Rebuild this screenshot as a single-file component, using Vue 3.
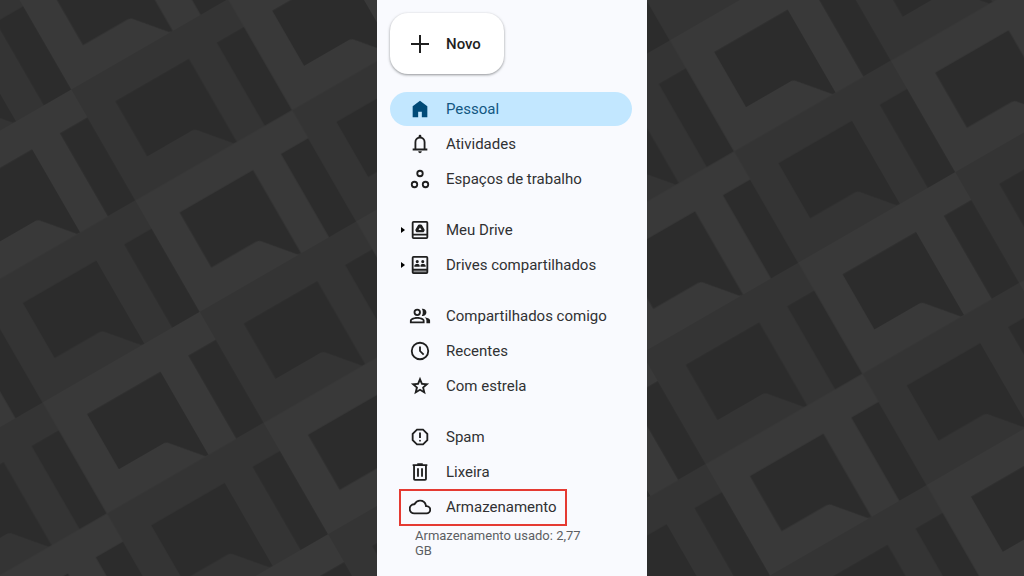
<script setup>
const groups = [
  [
    { label: 'Pessoal', icon: 'home', active: true },
    { label: 'Atividades', icon: 'bell' },
    { label: 'Espaços de trabalho', icon: 'spaces' },
  ],
  [
    { label: 'Meu Drive', icon: 'drive', expandable: true },
    { label: 'Drives compartilhados', icon: 'shared', expandable: true },
  ],
  [
    { label: 'Compartilhados comigo', icon: 'people' },
    { label: 'Recentes', icon: 'clock' },
    { label: 'Com estrela', icon: 'star' },
  ],
  [
    { label: 'Spam', icon: 'spam' },
    { label: 'Lixeira', icon: 'trash' },
    { label: 'Armazenamento', icon: 'cloud', marked: true },
  ],
]

const icons = {
  home: 'M4 21V9l8-6 8 6v12h-6v-6h-4v6z',
  bell: 'M4 19v-2h2v-7c0-2.800 1.800-5.100 4.500-5.800v-.7a1.500 1.500 0 0 1 3 0v.7C16.200 4.900 18 7.200 18 10v7h2v2zm8 3a2 2 0 0 1-2-2h4a2 2 0 0 1-2 2zM8 17h8v-7a4 4 0 0 0-8 0z',
  spaces: 'M6 22a4 4 0 1 1 0-8 4 4 0 0 1 0 8zm12 0a4 4 0 1 1 0-8 4 4 0 0 1 0 8zM6 20a2 2 0 1 0 0-4 2 2 0 0 0 0 4zm12 0a2 2 0 1 0 0-4 2 2 0 0 0 0 4zM12 10a4 4 0 1 1 0-8 4 4 0 0 1 0 8zm0-2a2 2 0 1 0 0-4 2 2 0 0 0 0 4z',
  drive: 'M5 2.200h14a2 2 0 0 1 2 2v15.600a2 2 0 0 1-2 2H5a2 2 0 0 1-2-2V4.200a2 2 0 0 1 2-2zM5 4.200v12h14v-12zM5 18v1.800h14V18zM11 6h2q.8 0 1.200.7l2.700 4.700q.4.700 0 1.400l-.6 1q-.4.700-1.200.7H8.900q-.8 0-1.200-.7l-.6-1q-.4-.7 0-1.400l2.700-4.700Q10.200 6 11 6zM12 9.200l-1.700 2.900h3.400z',
  shared: 'M5 2.200h14a2 2 0 0 1 2 2v15.600a2 2 0 0 1-2 2H5a2 2 0 0 1-2-2V4.200a2 2 0 0 1 2-2zM5 4.200v12h14v-12zM5 18v1.800h14V18zM9 10a1.700 1.700 0 1 1 0-3.400A1.700 1.700 0 0 1 9 10zm6 0a1.700 1.700 0 1 1 0-3.400 1.700 1.700 0 0 1 0 3.400zM5.800 14v-1c0-1.300 1.600-2 3.200-2s2.700.7 2.700 2v1zm6.700 0v-1c0-1.300 1-2 2.700-2s3 .7 3 2v1z',
  people: 'M1 20v-2.800c0-1.200.6-2.100 1.600-2.600C4.500 13.600 6.700 13 9 13s4.500.6 6.400 1.600c1 .5 1.600 1.400 1.600 2.600V20zm18 0v-3c0-1.500-.7-2.700-2-3.700 1.400.2 2.700.6 3.900 1.200 1.400.7 2.100 1.500 2.100 2.500v3zM9 12a4 4 0 1 1 0-8 4 4 0 0 1 0 8zm10-4a4 4 0 0 1-5 3.900A6 6 0 0 0 15 8a6 6 0 0 0-1-3.900A4 4 0 0 1 19 8zM3 18h12v-.8c0-.4-.2-.7-.5-.9C12.800 15.500 11 15 9 15s-3.800.5-5.500 1.300c-.3.200-.5.500-.5.900zm6-8a2 2 0 1 0 0-4 2 2 0 0 0 0 4z',
  clock: 'M15.300 16.700l1.400-1.400-3.700-3.700V7h-2v5.400zM12 22a10 10 0 1 1 0-20 10 10 0 0 1 0 20zm0-2a8 8 0 1 0 0-16 8 8 0 0 0 0 16z',
  star: 'M8.900 16.800l3.100-1.900 3.200 1.900-.9-3.500 2.700-2.400-3.500-.3L12 7.300l-1.400 3.300-3.600.3 2.800 2.400zM5.800 21l1.700-7.100L2 9.200l7.200-.6L12 2l2.800 6.600 7.200.6-5.500 4.700L18.200 21 12 17.300z',
  spam: 'M12 17a1 1 0 1 0 0-2 1 1 0 0 0 0 2zm-1-4h2V7h-2zM8.300 21L3 15.700V8.300L8.300 3h7.400L21 8.300v7.400L15.700 21zm.8-2h5.800l4.100-4.100V9.100L14.900 5H9.100L5 9.100v5.800z',
  trash: 'M6.500 21.500a2 2 0 0 1-2-2V5.500H4v-2h5v-1h6v1h5v2h-.5v14a2 2 0 0 1-2 2zm11-16h-11v14h11zM8.800 17.200h2v-9.400h-2zm4.400 0h2v-9.400h-2z',
  cloud: 'M19.400 10A7.500 7.500 0 0 0 12 4C9.100 4 6.600 5.600 5.400 8A6 6 0 0 0 6 20h13a5 5 0 0 0 .4-10zM19 18H6a4 4 0 0 1-.4-8l1.100-.1.500-1A5.500 5.500 0 0 1 17.400 10.400l.3 1.500 1.500.1A3 3 0 0 1 19 18z',
}

const hole = 'M32.300 32.300H117.200V128.400L113.500 127.700L88 97.500Q86.500 96 84 96H32.300Z'
const slot = 'M149.300 32.300H181V128.400H149.300Z'
const cells = [
  { x: 0, y: 0, tone: 'dim' },
  { x: 181.05, y: 0, tone: 'lit' },
  { x: 0, y: 128.37, tone: 'lit' },
  { x: 181.05, y: 128.37, tone: 'dim' },
]
</script>

<template>
  <div class="stage">
    <svg class="backdrop" aria-hidden="true">
      <defs>
        <pattern
          id="lattice"
          width="362.1"
          height="256.74"
          patternUnits="userSpaceOnUse"
          patternTransform="translate(71.3 89.5) rotate(-30)"
        >
          <g v-for="(c, i) in cells" :key="i" :transform="`translate(${c.x} ${c.y})`">
            <rect width="181.05" height="128.37" :class="c.tone" />
            <path :d="hole" class="hole" />
            <path :d="slot" class="hole" />
          </g>
        </pattern>
      </defs>
      <rect width="100%" height="100%" fill="url(#lattice)" />
    </svg>

    <aside class="panel">
      <button type="button" class="new">
        <svg viewBox="0 0 24 24" aria-hidden="true"><path d="M11 3h2v8h8v2h-8v8h-2v-8H3v-2h8z" /></svg>
        <span>Novo</span>
      </button>

      <nav>
        <ul v-for="(group, g) in groups" :key="g" class="group">
          <li
            v-for="item in group"
            :key="item.label"
            class="row"
            :class="{ active: item.active, marked: item.marked }"
          >
            <button v-if="item.expandable" type="button" class="twisty" :aria-label="item.label">
              <svg viewBox="0 0 4 6" aria-hidden="true"><path d="M0 0l4 3-4 3z" /></svg>
            </button>
            <a href="#" class="link">
              <svg viewBox="0 0 24 24" class="icon" aria-hidden="true">
                <path v-if="item.icon === 'shared'" d="M4 17h16v4H4z" class="shelf" />
                <path :d="icons[item.icon]" fill-rule="evenodd" />
              </svg>
              <span>{{ item.label }}</span>
            </a>
          </li>
        </ul>
      </nav>

      <p class="usage">Armazenamento usado: 2,77 GB</p>
    </aside>
  </div>
</template>

<style>
body {
  margin: 0;
}
</style>

<style scoped>
.stage {
  position: relative;
  display: flex;
  justify-content: center;
  min-height: 100vh;
  overflow: hidden;
  background: #343434;
  font-family: Roboto, "Liberation Sans", sans-serif;
  color: #1f1f1f;
}
.backdrop {
  position: absolute;
  inset: 0;
  width: 100%;
  height: 100%;
}
.dim {
  fill: #343434;
}
.lit {
  fill: #393939;
}
.hole {
  fill: #2c2c2c;
}
.panel {
  position: relative;
  box-sizing: border-box;
  width: 270px;
  padding: 13px 15px 0 13px;
  background: #f9fafe;
}
.new {
  display: flex;
  align-items: center;
  gap: 14px;
  height: 61px;
  padding: 0 23px 0 18px;
  border: 0;
  border-radius: 18px;
  background: #fff;
  box-shadow: 0 1px 3px rgba(60, 64, 67, 0.4), 0 1px 2px rgba(60, 64, 67, 0.2);
  font: 500 15px/20px Roboto, "Liberation Sans", sans-serif;
  color: #1f1f1f;
}
.new svg {
  width: 24px;
  height: 24px;
  fill: #1f1f1f;
}
nav {
  display: flex;
  flex-direction: column;
  gap: 17px;
  margin-top: 18px;
}
.group {
  display: flex;
  flex-direction: column;
  gap: 1px;
  margin: 0;
  padding: 0;
  list-style: none;
}
.row {
  position: relative;
  display: flex;
  justify-content: flex-end;
  height: 34px;
  border-radius: 17px;
}
.active {
  background: #c2e7ff;
}
.active .link {
  color: #125782;
}
.marked::after {
  content: "";
  position: absolute;
  inset: -1px 65px -2px 9px;
  border: 2px solid #e53a32;
  pointer-events: none;
}
.twisty {
  display: flex;
  flex: 1;
  align-items: center;
  justify-content: flex-end;
  padding: 0 4px 0 0;
  border: 0;
  background: none;
}
.twisty svg {
  width: 4px;
  height: 6px;
}
.link {
  display: flex;
  align-items: center;
  gap: 15px;
  width: 223px;
  font-size: 15px;
  line-height: 20px;
  color: #303133;
  text-decoration: none;
  white-space: nowrap;
}
.icon {
  width: 22px;
  height: 22px;
  fill: #1f1f1f;
}
.active .icon {
  fill: #004a77;
}
.icon .shelf {
  fill: #8a8b8d;
}
.usage {
  width: 180px;
  margin: 4px 0 0 25px;
  font-size: 13px;
  line-height: 15px;
  color: #5c5f63;
}
</style>
